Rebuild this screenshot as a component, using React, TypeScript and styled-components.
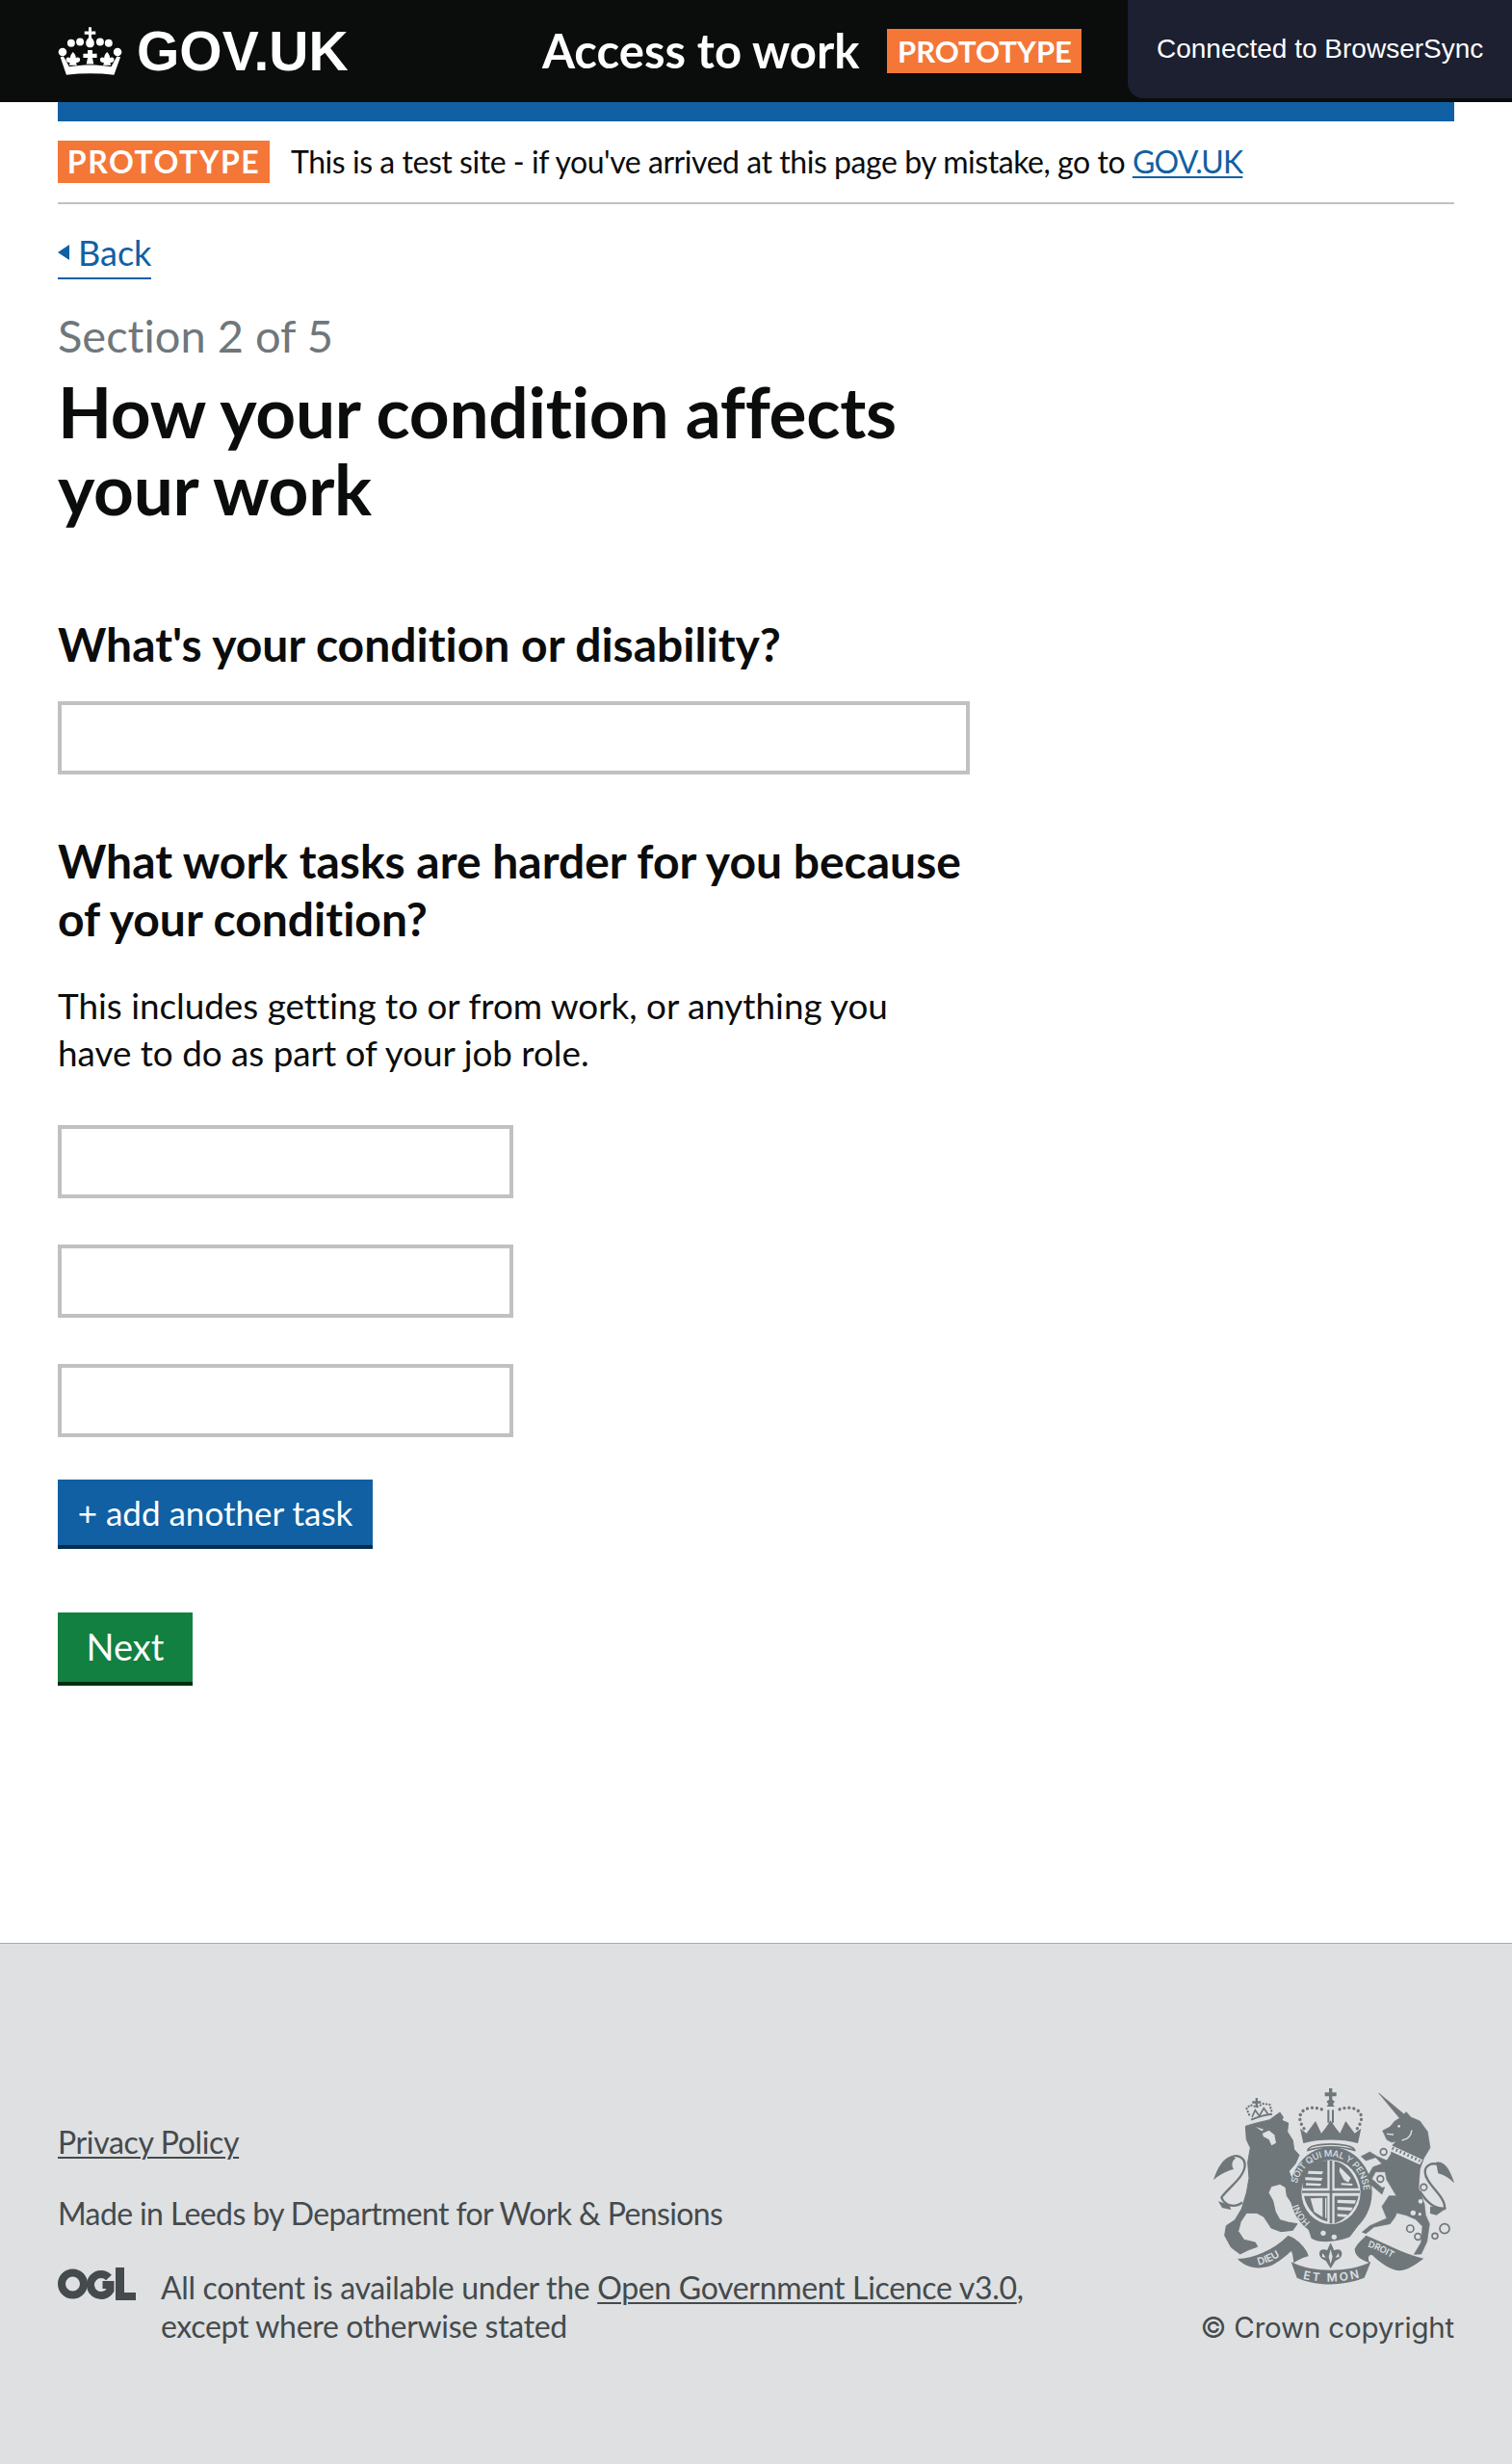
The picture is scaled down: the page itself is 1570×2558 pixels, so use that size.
import React from 'react';
import styled, { createGlobalStyle } from 'styled-components';

const FONT = `Lato, "Noto Sans", sans-serif`;
const BG = '#dee0e2';
const INK = '#6f777b';

const Global = createGlobalStyle`
  html, body { margin: 0; padding: 0; background: #fff; }
  body { font-family: ${FONT}; color: #0b0c0c; font-variant-ligatures: none; }
  #root { min-height: 2558px; display: flex; flex-direction: column; }
`;

const Header = styled.header`
  background: #0b0c0c;
  height: 106px;
  padding-left: 60px;
  display: flex;
  align-items: center;
`;
const Brand = styled.a`
  display: flex;
  align-items: center;
  width: 503px;
  gap: 14px;
  color: #fff;
  font: 700 57px/60px "Liberation Sans", Arial, sans-serif;
  text-decoration: none;
`;
const ServiceName = styled.span`
  color: #fff;
  font-weight: 700;
  font-size: 49px;
  line-height: 60px;
  padding-bottom: 3px;
`;
const HeaderTag = styled.strong`
  margin-left: 29px;
  width: 202px;
  height: 46px;
  background: #f47738;
  color: #fff;
  font-size: 31px;
  line-height: 46px;
  font-weight: 700;
  text-align: center;
`;
const SyncNotice = styled.div`
  position: absolute;
  top: 0;
  right: 0;
  width: 399px;
  height: 102px;
  box-sizing: border-box;
  padding: 33px 0 0 30px;
  background: #1c2031;
  border-bottom-left-radius: 16px;
  color: #fff;
  font: 400 28px/36px "Liberation Sans", Arial, sans-serif;
  white-space: nowrap;
`;
const Main = styled.main`
  margin: 0 60px;
  flex: 1;
`;
const BlueBar = styled.div`
  height: 20px;
  background: #1060a3;
`;
const PhaseBanner = styled.div`
  display: flex;
  align-items: center;
  gap: 22px;
  padding: 20px 0;
  border-bottom: 2px solid #bfc1c3;
  font-size: 32px;
  line-height: 44px;
  letter-spacing: -0.45px;
`;
const PhaseTag = styled.strong`
  width: 220px;
  height: 44px;
  background: #f47738;
  color: #fff;
  font-size: 32px;
  line-height: 44px;
  font-weight: 700;
  text-align: center;
  letter-spacing: 1.5px;
`;
const Link = styled.a`
  color: #1060a3;
  text-decoration: underline;
  text-decoration-thickness: 2px;
  text-underline-offset: 3px;
  letter-spacing: -0.8px;
`;
const BackLink = styled.a`
  display: inline-flex;
  align-items: center;
  gap: 9px;
  margin-top: 30px;
  border-bottom: 2px solid #1060a3;
  height: 40px;
  padding-bottom: 6px;
  color: #1060a3;
  font-size: 36px;
  line-height: 40px;
  text-decoration: none;
  &::before {
    content: '';
    border-style: solid;
    border-width: 8px 12px 8px 0;
    border-color: transparent #1060a3 transparent transparent;
  }
`;
const Caption = styled.div`
  margin-top: 34px;
  color: #6f777b;
  font-size: 47px;
  line-height: 48px;
`;
const Title = styled.h1`
  margin: 15px 0 0;
  width: 947px;
  font-size: 73px;
  line-height: 80px;
  font-weight: 700;
  letter-spacing: -0.3px;
`;
const FormColumn = styled.form`
  display: flex;
  flex-direction: column;
  align-items: flex-start;
  width: 947px;
`;
const Question = styled.label`
  display: block;
  font-size: 48px;
  line-height: 60px;
  font-weight: 700;
`;
const ConditionQuestion = styled(Question)`
  margin-top: 92px;
`;
const TasksQuestion = styled(Question)`
  margin-top: 60px;
`;
const Hint = styled.p`
  margin: 36px 0 0;
  width: 900px;
  font-size: 36.8px;
  line-height: 49px;
`;
const TextInput = styled.input<{ $wide?: boolean }>`
  display: block;
  box-sizing: border-box;
  width: ${(p) => (p.$wide ? '947px' : '473px')};
  height: 76px;
  margin: 0;
  padding: 0 8px;
  border: 4px solid #bfc1c3;
  background: #fff;
  border-radius: 0;
  outline: none;
`;
const WideInputSlot = styled.div`
  margin-top: 29px;
`;
const TaskInputs = styled.div`
  display: flex;
  flex-direction: column;
  gap: 48px;
  margin-top: 50px;
`;
const Button = styled.button<{ $bg: string; $edge: string }>`
  display: block;
  box-sizing: border-box;
  border: 0;
  border-radius: 0;
  background: ${(p) => p.$bg};
  box-shadow: 0 4px 0 ${(p) => p.$edge};
  color: #fff;
  font-family: ${FONT};
  font-variant-ligatures: none;
`;
const AddButton = styled(Button)`
  width: 327px;
  height: 68px;
  margin-top: 44px;
  font-size: 35px;
  line-height: 64px;
`;
const NextButton = styled(Button)`
  width: 140px;
  height: 72px;
  margin-top: 70px;
  font-size: 38px;
  line-height: 66px;
  padding-bottom: 4px;
`;
const Footer = styled.footer`
  height: 541px;
  box-sizing: border-box;
  border-top: 1px solid #a1acb2;
  background: ${BG};
  padding: 150px 60px 0;
  display: flex;
  justify-content: space-between;
  color: #454a4c;
  font-size: 32px;
  line-height: 40px;
  letter-spacing: -0.55px;
`;
const FooterMeta = styled.div`
  display: flex;
  flex-direction: column;
  align-items: flex-start;
  padding-top: 36px;
`;
const FooterLink = styled.a`
  color: #454a4c;
  text-decoration: underline;
  text-decoration-thickness: 2px;
  text-underline-offset: 3px;
`;
const PrivacyLink = styled(FooterLink)`
  letter-spacing: -0.35px;
`;
const MadeIn = styled.p`
  margin: 34px 0 0;
  letter-spacing: -0.62px;
`;
const Licence = styled.div`
  display: flex;
  gap: 26px;
  margin-top: 36px;
`;
const LicenceText = styled.p`
  margin: 1px 0 0;
  width: 900px;
  letter-spacing: -0.32px;
`;
const Copyright = styled.div`
  display: flex;
  flex-direction: column;
  align-items: flex-end;
  gap: 20px;
`;
const CopyrightText = styled.div`
  font-family: Inter, "Noto Sans", sans-serif;
  font-size: 29.5px;
  letter-spacing: -0.2px;
  line-height: 40px;
  margin-top: 4px;
`;
const LogoMark = styled.svg`
  flex: none;
  display: block;
`;

const CrownLogo = () => (
  <LogoMark width={68} height={50} viewBox="62 48 206 150" fill="#fff" aria-hidden="true">
    <path d="M159 48h9v13h13v10h-13v10c7 5 10 13 8 22-2 6-5 8-12 9-8-1-11-3-13-9-2-9 1-17 8-22V71h-13V61h13z" />
    <circle cx="77" cy="126" r="13" /><circle cx="104" cy="98" r="12" /><circle cx="132" cy="94" r="12" />
    <circle cx="195" cy="94" r="12" /><circle cx="222" cy="98" r="12" /><circle cx="250" cy="126" r="13" />
    <path d="M156 120h15v11h14v13h-14l4 20h-23l4-20h-14v-13h14z" />
    <path d="M110 126c6 6 9 12 9 18 8-4 14 0 13 7-1 6-6 9-12 8l2 9H98l2-9c-6 1-11-2-12-8-1-7 5-11 13-7 0-6 3-12 9-18z" />
    <path d="M217 126c6 6 9 12 9 18 8-4 14 0 13 7-1 6-6 9-12 8l2 9h-24l2-9c-6 1-11-2-12-8-1-7 5-11 13-7 0-6 3-12 9-18z" />
    <path d="M70 142l10-2 18 32c44-7 88-7 132 0l18-32 11 2-20 56c-50-6-100-6-150 0z" />
  </LogoMark>
);

const OglLogo = () => (
  <LogoMark width={81} height={34} viewBox="0 0 81 34" aria-hidden="true">
    <circle cx="15.5" cy="17" r="11.5" fill="none" stroke="#454a4c" strokeWidth="8" />
    <path d="M53 10.5a11 11 0 1 0 1.5 13V18h-8" fill="none" stroke="#454a4c" strokeWidth="8" />
    <path d="M60 0h9v26h12v8H60z" fill="#454a4c" />
  </LogoMark>
);

const Arms = () => (
  <LogoMark width={250} height={204} viewBox="90 55 750 612" fill={INK} aria-hidden="true">
    <defs>
      <path id="garterTop" d="M350 352A106 116 0 1 1 530 462" />
      <path id="garterLow" d="M392 472A106 116 0 0 1 349 388" />
      <path id="ribL" d="M230 606Q290 592 336 548" />
      <path id="ribM" d="M368 648Q455 668 548 644" />
      <path id="ribR" d="M570 548Q630 568 686 612" />
    </defs>

    <path d="M450 55h10v13h13v12h-13v10l8 6-6 8 5 8h-24l5-8-6-8 8-6V80h-13V68h13z" />
    <g fill="none" stroke={INK} strokeLinecap="round" strokeWidth="10" strokeDasharray="0.1 15">
      <path d="M372 180C336 130 382 100 436 124" />
      <path d="M538 180C574 130 528 100 474 124" />
    </g>
    <rect x="445" y="122" width="6" height="40" /><rect x="459" y="122" width="6" height="40" />
    <path d="M360 180l20 15 28-38 18 38 14-18 15-22 15 22 14 18 18-38 28 38 20-15-10 46c-50-14-120-14-170 0z" />
    <path d="M384 248c0-26 142-26 146 0-44-14-102-14-146 0z" fill={BG} stroke={INK} strokeWidth="5" />

    <g transform="translate(75 45)">
      <path stroke={INK} strokeWidth="3" strokeLinejoin="round" d="M115 128C145 118 175 112 190 108L222 85 232 100 228 110 248 118 245 145 262 172 266 200 282 218 270 245 250 268 268 320 290 352 283 376 262 372 244 345 240 318 222 308 195 315 186 335 200 360 208 395 222 420 250 428 276 432 262 452 225 456 195 445 172 410 150 398 118 398 100 425 92 455 110 482 145 490 152 503 122 514 98 526 70 505 50 468 55 438 82 420 103 385 118 335 126 290 122 240 130 195 118 170Z" />
      <path d="M232 260L292 322" fill="none" stroke={INK} strokeWidth="3" />
      <path d="M147 130L172 138 165 143ZM168 150L188 141 205 155 210 180 196 188 188 170 170 160Z" fill={BG} />
      <path d="M105 365C80 385 50 375 40 350 60 320 110 290 113 250 113 222 85 215 70 225" fill="none" stroke={INK} strokeWidth="7" />
      <path d="M74 220C50 224 30 250 15 296 30 280 55 268 78 262 70 250 72 236 84 228ZM30 362L64 372 70 388 42 382Z" />
      <g fill="none" stroke={INK}>
        <path d="M132 108C150 100 180 92 198 90" strokeWidth="6" />
        <path d="M126 92L118 72 130 62 150 68 170 58 190 60 198 88" strokeWidth="7" strokeLinecap="round" strokeDasharray="0.1 10" />
        <path d="M135 100L145 78 158 96 172 72 186 92" strokeWidth="5" />
      </g>
      <path d="M146 40h7v10h10v7h-10v12h-7V57h-10v-7h10z" />
    </g>

    <g transform="translate(465 45)">
      <path stroke={INK} strokeWidth="2" strokeLinejoin="round" d="M205 103L140 25 218 90 226 84 240 100 268 112 292 145 300 195 280 228 268 262 264 320 282 370 286 405 298 432 290 488 272 526 250 527 272 490 276 440 255 418 225 405 196 398 190 412 175 432 125 442 100 462 88 458 112 438 165 415 150 378 172 345 195 345 165 295 160 270 130 270 118 292 150 320 158 318 150 340 115 310 105 285 122 255 150 245 130 225 100 235 85 222 112 208 135 222 165 235 178 215 182 188 195 175 180 178 165 170 152 142 175 130 190 112Z" />
      <path d="M243 140C240 165 225 170 212 172M165 152L186 154" fill="none" stroke={BG} strokeWidth="4" />
      <circle cx="203" cy="128" r="4" fill={BG} />
      <path d="M180 188L276 232 268 248 176 206Z" fill={BG} />
      <path d="M182 196L268 236" fill="none" stroke={INK} strokeWidth="9" strokeDasharray="5 8" />
      <path d="M268 330C285 360 310 385 345 385 350 345 285 310 284 270 284 250 305 240 325 247" fill="none" stroke={INK} strokeWidth="7" />
      <path d="M318 240C345 235 360 260 376 306 360 290 345 280 325 275ZM300 378L352 382 320 405 300 400Z" />
      <g fill="none" stroke={INK} strokeWidth="5">
        <circle cx="155" cy="208" r="10" /><circle cx="145" cy="292" r="10" /><circle cx="280" cy="318" r="10" />
        <circle cx="238" cy="447" r="11" /><circle cx="262" cy="472" r="10" /><circle cx="315" cy="470" r="9" /><circle cx="345" cy="447" r="15" />
      </g>
      <circle cx="270" cy="362" r="7" fill={BG} /><circle cx="247" cy="398" r="8" fill={BG} /><circle cx="268" cy="402" r="5" fill={BG} />
    </g>

    <ellipse cx="456" cy="378" rx="128" ry="140" />
    <ellipse cx="456" cy="378" rx="92" ry="100" fill={BG} />
    <rect x="452" y="280" width="8" height="196" />
    <rect x="366" y="374" width="180" height="7" />
    <path d="M380 296C395 286 425 282 445 280V366H368C366 340 368 316 380 296ZM467 282C500 286 530 320 542 366H467ZM467 390H542C534 430 505 462 467 476ZM372 390H445V470C410 462 380 430 372 390Z" />
    <g fill={BG}>
      <path d="M386 312l46 2-4 9-44-2zM376 332l54 2-4 9-50-2zM378 350l48 2-3 7-45-2z" />
      <path d="M484 300l34 34-8 14-14-8-14-26zM488 350l36 2-2 6-34-2z" />
      <path d="M476 402l58 2-4 10-54-2zM476 424l48 2-5 10-43-2zM476 446l32 2-5 8-27-2z" />
      <path d="M392 398l38-2v60l-26-16zM438 396l4 0v64l-4-2z" />
    </g>
    <path d="M385 492C400 470 420 484 455 486 490 488 520 470 540 484L515 518C480 532 420 540 395 522Z" />
    <circle cx="432" cy="506" r="8" fill={BG} /><circle cx="466" cy="518" r="8" fill={BG} />
    <g fill={BG} fontFamily="Inter, 'Liberation Sans', sans-serif" fontWeight="500">
      <text fontSize="28"><textPath href="#garterTop">SOIT QUI MAL Y PENSE</textPath></text>
      <text fontSize="28"><textPath href="#garterLow">HONI</textPath></text>
    </g>

    <path d="M165 586C215 585 275 560 322 514 350 520 385 560 386 578 370 582 350 590 340 600 338 575 335 565 332 562 315 578 290 598 268 608 225 622 190 612 165 586Z" />
    <path d="M332 596C400 630 510 630 580 596L560 645C490 672 410 672 350 645Z" />
    <path d="M530 555C540 535 555 525 565 513 610 530 680 570 745 585 710 610 690 625 660 622 630 615 600 590 585 575 575 570 570 580 575 595L580 600C555 590 530 580 530 555Z" />
    <path d="M455 536l11 24c9-6 24-5 24 9 1 13-13 21-20 23l-15 24-15-24c-7-2-21-10-20-23 0-14 15-15 24-9z" />
    <path d="M455 556l-6 24 6 22 6-22zM430 568l10 14-12-2zM480 568l-10 14 12-2z" fill={BG} />
    <g fill={BG} fontFamily="Inter, 'Liberation Sans', sans-serif" fontWeight="600">
      <text fontSize="32"><textPath href="#ribL">DIEU</textPath></text>
      <text fontSize="36"><textPath href="#ribM" textLength="178">ET MON</textPath></text>
      <text fontSize="28"><textPath href="#ribR">DROIT</textPath></text>
    </g>
  </LogoMark>
);

export default function App() {
  return (
    <>
      <Global />
      <Header>
        <Brand href="#"><CrownLogo />GOV.UK</Brand>
        <ServiceName>Access to work</ServiceName>
        <HeaderTag>PROTOTYPE</HeaderTag>
      </Header>
      <SyncNotice>Connected to BrowserSync</SyncNotice>
      <Main>
        <BlueBar />
        <PhaseBanner>
          <PhaseTag>PROTOTYPE</PhaseTag>
          <span>This is a test site - if you've arrived at this page by mistake, go to <Link href="#">GOV.UK</Link></span>
        </PhaseBanner>
        <BackLink href="#">Back</BackLink>
        <Caption>Section 2 of 5</Caption>
        <Title>How your condition affects your work</Title>
        <FormColumn>
          <ConditionQuestion>What's your condition or disability?</ConditionQuestion>
          <WideInputSlot><TextInput $wide aria-label="Condition" /></WideInputSlot>
          <TasksQuestion>What work tasks are harder for you because of your condition?</TasksQuestion>
          <Hint>This includes getting to or from work, or anything you have to do as part of your job role.</Hint>
          <TaskInputs>
            <TextInput aria-label="Task 1" />
            <TextInput aria-label="Task 2" />
            <TextInput aria-label="Task 3" />
          </TaskInputs>
          <AddButton type="button" $bg="#1060a3" $edge="#002d4f">+ add another task</AddButton>
          <NextButton type="button" $bg="#128040" $edge="#002d10">Next</NextButton>
        </FormColumn>
      </Main>
      <Footer>
        <FooterMeta>
          <PrivacyLink href="#">Privacy Policy</PrivacyLink>
          <MadeIn>Made in Leeds by Department for Work &amp; Pensions</MadeIn>
          <Licence>
            <OglLogo />
            <LicenceText>All content is available under the <FooterLink href="#">Open Government Licence v3.0</FooterLink>, except where otherwise stated</LicenceText>
          </Licence>
        </FooterMeta>
        <Copyright>
          <Arms />
          <CopyrightText>© Crown copyright</CopyrightText>
        </Copyright>
      </Footer>
    </>
  );
}
